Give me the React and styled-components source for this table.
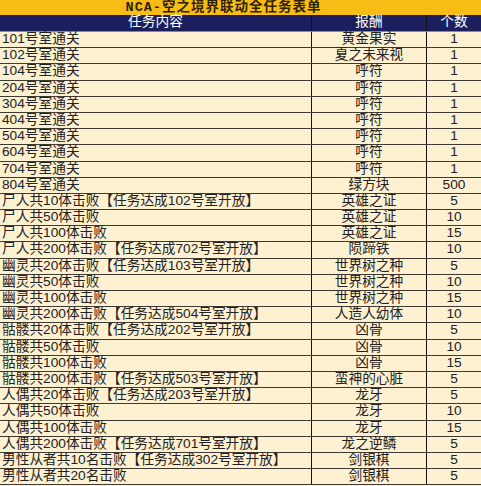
import styled, { createGlobalStyle } from "styled-components";

const Global = createGlobalStyle`
  body {
    margin: 0;
    background: #fff;
    font-family: "Liberation Sans", "Noto Sans CJK SC", sans-serif;
  }
`;

const rows = [
  ["101号室通关", "黄金果实", "1"],
  ["102号室通关", "夏之未来视", "1"],
  ["104号室通关", "呼符", "1"],
  ["204号室通关", "呼符", "1"],
  ["304号室通关", "呼符", "1"],
  ["404号室通关", "呼符", "1"],
  ["504号室通关", "呼符", "1"],
  ["604号室通关", "呼符", "1"],
  ["704号室通关", "呼符", "1"],
  ["804号室通关", "绿方块", "500"],
  ["尸人共10体击败【任务达成102号室开放】", "英雄之证", "5"],
  ["尸人共50体击败", "英雄之证", "10"],
  ["尸人共100体击败", "英雄之证", "15"],
  ["尸人共200体击败【任务达成702号室开放】", "陨蹄铁", "10"],
  ["幽灵共20体击败【任务达成103号室开放】", "世界树之种", "5"],
  ["幽灵共50体击败", "世界树之种", "10"],
  ["幽灵共100体击败", "世界树之种", "15"],
  ["幽灵共200体击败【任务达成504号室开放】", "人造人幼体", "10"],
  ["骷髅共20体击败【任务达成202号室开放】", "凶骨", "5"],
  ["骷髅共50体击败", "凶骨", "10"],
  ["骷髅共100体击败", "凶骨", "15"],
  ["骷髅共200体击败【任务达成503号室开放】", "蛮神的心脏", "5"],
  ["人偶共20体击败【任务达成203号室开放】", "龙牙", "5"],
  ["人偶共50体击败", "龙牙", "10"],
  ["人偶共100体击败", "龙牙", "15"],
  ["人偶共200体击败【任务达成701号室开放】", "龙之逆鳞", "5"],
  ["男性从者共10名击败【任务达成302号室开放】", "剑银棋", "5"],
  ["男性从者共20名击败", "剑银棋", "5"],
];

const Sheet = styled.div`
  width: 481px;
  height: 486px;
  overflow: hidden;
  background: #fef1d2;
`;

const Title = styled.div`
  height: 15px;
  background: #f8bd14;
  color: #2e2200;
  font-family: "Liberation Mono", "Noto Sans CJK SC", monospace;
  font-size: 13.5px;
  font-weight: 700;
  line-height: 15px;
  text-align: center;
  padding-right: 34px;
  white-space: nowrap;
  letter-spacing: 1px;
`;

const Row = styled.div`
  display: grid;
  grid-template-columns: 312px 115px 1fr;
  height: ${(p) => (p.$head ? "17px" : "16.2px")};
  box-sizing: border-box;
  border-bottom: 1px solid ${(p) => (p.$head ? "#8c8a80" : "#3e3b34")};
  background: ${(p) => (p.$head ? "#1c1f5e" : "#fef1d2")};
  color: ${(p) => (p.$head ? "#ffffff" : "#222222")};
`;

const Cell = styled.div`
  font-size: 13.7px;
  line-height: 14.6px;
  white-space: nowrap;
  text-align: ${(p) => p.$align || "center"};
  padding-left: ${(p) => (p.$align === "left" ? "2px" : "0")};
  border-right: ${(p) => (p.$last ? "none" : "1px solid #111")};
`;

export default function App() {
  return (
    <>
      <Global />
      <Sheet>
        <Title>NCA-空之境界联动全任务表单</Title>
        <Row $head>
          <Cell>任务内容</Cell>
          <Cell>报酬</Cell>
          <Cell $last>个数</Cell>
        </Row>
        {rows.map(([task, reward, count], i) => (
          <Row key={i}>
            <Cell $align="left">{task}</Cell>
            <Cell>{reward}</Cell>
            <Cell $last>{count}</Cell>
          </Row>
        ))}
      </Sheet>
    </>
  );
}
